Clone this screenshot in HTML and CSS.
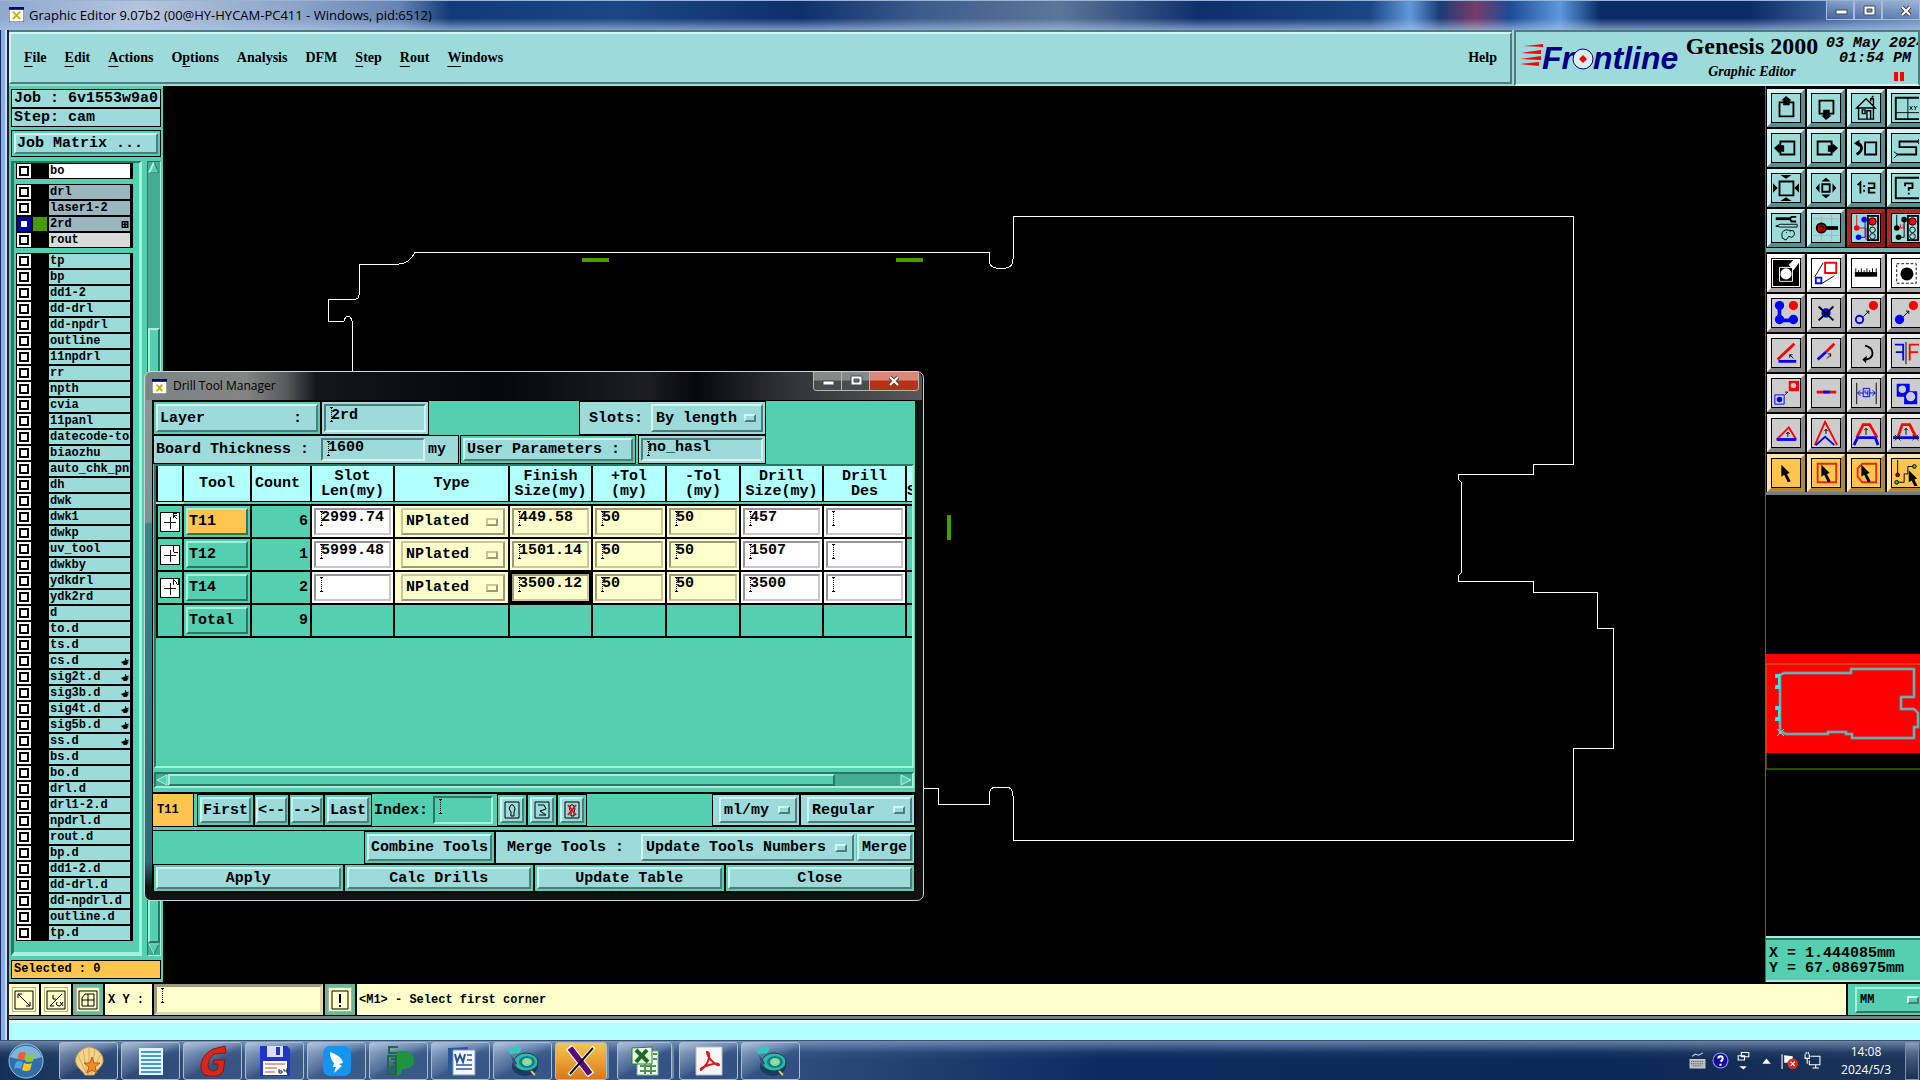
FILE: index.html
```html
<!DOCTYPE html>
<html lang="en">
<head>
<meta charset="utf-8">
<title>Graphic Editor 9.07b2</title>
<link rel="stylesheet" href="styles.css">
</head>
<body>
<header class="titlebar">
  <svg class="app-icon" viewBox="0 0 16 16"><rect width="16" height="16" fill="#fff" stroke="#333"/><rect width="16" height="3" fill="#000080"/><path d="M4 5l8 8M12 5l-8 8" stroke="#c8b400" stroke-width="2"/></svg>
  <span class="title-text">Graphic Editor 9.07b2 (00@HY-HYCAM-PC411 - Windows, pid:6512)</span>
  <div class="win-buttons">
    <button aria-label="Minimize"><svg viewBox="0 0 28 20"><rect x="9" y="9" width="11" height="4" fill="#fff" stroke="#445"/></svg></button>
    <button aria-label="Maximize"><svg viewBox="0 0 28 20"><path d="M9 5h11v9H9zM12 8v3h5V8z" fill="#fff" stroke="#445" fill-rule="evenodd"/></svg></button>
    <button class="wide" aria-label="Close"><svg viewBox="0 0 28 20"><path d="M5 6l8 8M13 6l-8 8" stroke="#445" stroke-width="4"/><path d="M5 6l8 8M13 6l-8 8" stroke="#fff" stroke-width="2"/></svg></button>
  </div>
</header>

<main class="app">
  <div class="top">
    <nav class="menubar">
      <button><u>F</u>ile</button><button><u>E</u>dit</button><button><u>A</u>ctions</button><button>O<u>p</u>tions</button><button>Analysis</button><button>DFM</button><button><u>S</u>tep</button><button><u>R</u>out</button><button><u>W</u>indows</button>
      <button class="help">Help</button>
    </nav>
    <div class="brand">
      <svg class="logo" viewBox="0 0 160 34" role="img" aria-label="Frontline">
        <g fill="#f00"><path d="M3 5L23 3v3zM1 12L21 9v4zM0 18l21-3v4zM0 23l19-2v4z"/></g>
        <text x="22" y="28">Fr</text><text x="73" y="28">ntline</text>
        <circle cx="63" cy="18" r="10" fill="#d8f0f4" stroke="#000080"/><path d="M63 14l4 4-4 4-4-4z" fill="#f00"/>
      </svg>
      <div class="product"><b>Genesis 2000</b><i>Graphic Editor</i></div>
      <div class="clock"><span>03 May 2024</span><span class="time">01:54 PM</span><svg viewBox="0 0 10 9"><path d="M0 0h4v9H0zM6 0h4v9H6z" fill="#f00"/></svg></div>
    </div>
  </div>

  <div class="workspace">
    <aside class="sidebar">
      <div class="info job">Job : 6v1553w9a0</div>
      <div class="info">Step: cam</div>
      <div class="matrix"><button class="raised">Job Matrix ...</button></div>
      <div class="layer-area">
        <div class="layers">
          <div class="group">
            <label class="layer white"><input type="checkbox"><i></i><span>bo</span></label>
          </div>
          <div class="group">
            <label class="layer grey"><input type="checkbox"><i></i><span>drl</span></label>
            <label class="layer grey"><input type="checkbox"><i></i><span>laser1-2</span></label>
            <label class="layer grey"><input type="checkbox" checked><i class="on"></i><span>2rd</span><svg viewBox="0 0 5 5"><path d="M0 0h5v5H0zM1 1v1h1V1zM3 1v1h1V1zM1 3v1h1V3zM3 3v1h1V3z" fill-rule="evenodd"/></svg></label>
            <label class="layer pale"><input type="checkbox"><i></i><span>rout</span></label>
          </div>
          <div class="group">
            <label class="layer"><input type="checkbox"><i></i><span>tp</span></label>
            <label class="layer"><input type="checkbox"><i></i><span>bp</span></label>
            <label class="layer"><input type="checkbox"><i></i><span>dd1-2</span></label>
            <label class="layer"><input type="checkbox"><i></i><span>dd-drl</span></label>
            <label class="layer"><input type="checkbox"><i></i><span>dd-npdrl</span></label>
            <label class="layer"><input type="checkbox"><i></i><span>outline</span></label>
            <label class="layer"><input type="checkbox"><i></i><span>11npdrl</span></label>
            <label class="layer"><input type="checkbox"><i></i><span>rr</span></label>
            <label class="layer"><input type="checkbox"><i></i><span>npth</span></label>
            <label class="layer"><input type="checkbox"><i></i><span>cvia</span></label>
            <label class="layer"><input type="checkbox"><i></i><span>11panl</span></label>
            <label class="layer"><input type="checkbox"><i></i><span>datecode-to</span></label>
            <label class="layer"><input type="checkbox"><i></i><span>biaozhu</span></label>
            <label class="layer"><input type="checkbox"><i></i><span>auto_chk_pnl</span></label>
            <label class="layer"><input type="checkbox"><i></i><span>dh</span></label>
            <label class="layer"><input type="checkbox"><i></i><span>dwk</span></label>
            <label class="layer"><input type="checkbox"><i></i><span>dwk1</span></label>
            <label class="layer"><input type="checkbox"><i></i><span>dwkp</span></label>
            <label class="layer"><input type="checkbox"><i></i><span>uv_tool</span></label>
            <label class="layer"><input type="checkbox"><i></i><span>dwkby</span></label>
            <label class="layer"><input type="checkbox"><i></i><span>ydkdrl</span></label>
            <label class="layer"><input type="checkbox"><i></i><span>ydk2rd</span></label>
            <label class="layer"><input type="checkbox"><i></i><span>d</span></label>
            <label class="layer"><input type="checkbox"><i></i><span>to.d</span></label>
            <label class="layer"><input type="checkbox"><i></i><span>ts.d</span></label>
            <label class="layer"><input type="checkbox"><i></i><span>cs.d</span><svg viewBox="0 0 8 8"><use href="#hand"/></svg></label>
            <label class="layer"><input type="checkbox"><i></i><span>sig2t.d</span><svg viewBox="0 0 8 8"><use href="#hand"/></svg></label>
            <label class="layer"><input type="checkbox"><i></i><span>sig3b.d</span><svg viewBox="0 0 8 8"><use href="#hand"/></svg></label>
            <label class="layer"><input type="checkbox"><i></i><span>sig4t.d</span><svg viewBox="0 0 8 8"><use href="#hand"/></svg></label>
            <label class="layer"><input type="checkbox"><i></i><span>sig5b.d</span><svg viewBox="0 0 8 8"><use href="#hand"/></svg></label>
            <label class="layer"><input type="checkbox"><i></i><span>ss.d</span><svg viewBox="0 0 8 8"><use href="#hand"/></svg></label>
            <label class="layer"><input type="checkbox"><i></i><span>bs.d</span></label>
            <label class="layer"><input type="checkbox"><i></i><span>bo.d</span></label>
            <label class="layer"><input type="checkbox"><i></i><span>drl.d</span></label>
            <label class="layer"><input type="checkbox"><i></i><span>drl1-2.d</span></label>
            <label class="layer"><input type="checkbox"><i></i><span>npdrl.d</span></label>
            <label class="layer"><input type="checkbox"><i></i><span>rout.d</span></label>
            <label class="layer"><input type="checkbox"><i></i><span>bp.d</span></label>
            <label class="layer"><input type="checkbox"><i></i><span>dd1-2.d</span></label>
            <label class="layer"><input type="checkbox"><i></i><span>dd-drl.d</span></label>
            <label class="layer"><input type="checkbox"><i></i><span>dd-npdrl.d</span></label>
            <label class="layer"><input type="checkbox"><i></i><span>outline.d</span></label>
            <label class="layer"><input type="checkbox"><i></i><span>tp.d</span></label>
          </div>
        </div>
        <div class="vscroll">
          <svg viewBox="0 0 12 12"><path d="M6 0L1 12h11z" fill="#54cfb0"/><path d="M6 0L1 11" stroke="#b4f2e0" stroke-width="2"/><path d="M6 0l5 11H1" fill="none" stroke="#2f7563" stroke-width="1"/></svg>
          <div class="vtrack"></div><div class="vthumb"></div>
          <svg viewBox="0 0 12 12"><path d="M1 1h10L6 11z" fill="#54cfb0" stroke="#2f7563"/><path d="M6 11L1 1h10" fill="none" stroke="#b4f2e0"/></svg>
        </div>
      </div>
      <div class="selected">Selected : 0</div>
    </aside>

    <section class="canvas">
      <svg viewBox="163 86 1602 897" preserveAspectRatio="xMinYMin slice" fill="none" stroke="#fff">
        <g shape-rendering="crispEdges">
        <path d="M352 379V321Q351 317 348 316Q345 317 344 321H328V299H356Q359 299 359 295V264H399Q410 263 415 252H989V259Q989 267 996 268H1006Q1013 267 1013 259V216H1573V464H1533V474H1458V479L1461 482V573L1458 576V581H1533V592H1597V628H1613V748H1573V840H1013V796Q1013 787 1006 787H996Q989 787 989 796V804H938V788H919"/>
        </g>
        <g stroke="#459b00" stroke-width="4"><path d="M582 260h27M896 260h27M949 515v25"/></g>
      </svg>
    </section>

    <aside class="tools">
      <div class="toolgrid">
        <button class="t" aria-label="Pan up"><svg viewBox="0 0 28 28"><path d="M7 8h15v15H7z" fill="none" stroke="#000" stroke-width="2"/><path d="M14 1l6 5h-2v5h-7V6H9z"/></svg></button>
        <button class="t" aria-label="Pan down"><svg viewBox="0 0 28 28"><path d="M7 6h15v14H7z" fill="none" stroke="#000" stroke-width="2"/><path d="M14 27l6-5h-2v-6h-7v6H9z"/></svg></button>
        <button class="t" aria-label="Home"><svg viewBox="0 0 28 28" fill="none" stroke="#000"><path d="M4 14L14 4l10 10zM6 14v12h16V14M10 16h3v4h-3zM15 26v-9h4v9M19 7V4h3v7M20 3l2-2" stroke-width="1.5"/></svg></button>
        <button class="t" aria-label="Zoom XY"><svg viewBox="0 0 28 28" fill="none" stroke="#000"><path d="M3 3h28v23H3z" stroke-width="2"/><path d="M16 3v23M3 19h26M18 12l3 4M21 12l-3 4M23 12l1 2 2-2M24 14v2"/></svg></button>
        <button class="t" aria-label="Pan left"><svg viewBox="0 0 28 28"><path d="M8 7h15v14H8z" fill="none" stroke="#000" stroke-width="2"/><path d="M1 14l6-5v2h5v7H7v2z"/></svg></button>
        <button class="t" aria-label="Pan right"><svg viewBox="0 0 28 28"><path d="M5 7h15v14H5z" fill="none" stroke="#000" stroke-width="2"/><path d="M27 14l-6-5v2h-5v7h5v2z"/></svg></button>
        <button class="t" aria-label="Previous view"><svg viewBox="0 0 28 28" fill="none" stroke="#000"><path d="M13 8h12v13H13z" stroke-width="2"/><path d="M4 9q4 0 5 4t-5 8" stroke-width="3"/><path d="M1 9l6-4v8z" fill="#000" stroke="none"/></svg></button>
        <button class="t" aria-label="Serpentine"><svg viewBox="0 0 28 28" fill="none" stroke="#000"><path d="M28 7H7v6h18v8H4" stroke-width="2"/><path d="M1 18l4 3-4 4M28 4l-2 3 2 3"/></svg></button>
        <button class="t" aria-label="Zoom out"><svg viewBox="0 0 28 28"><path d="M7 7h15v15H7z" fill="none" stroke="#000" stroke-width="2"/><path d="M8 0h12l-6 4zM8 28h12l-6-4zM0 9v10l5-5zM28 9v10l-5-5z"/></svg></button>
        <button class="t" aria-label="Zoom in"><svg viewBox="0 0 28 28"><path d="M10 10h8v8h-8z" fill="none" stroke="#000" stroke-width="2"/><path d="M14 3l5 4H9zM14 25l5-4H9zM3 14l4-5v10zM25 14l-4-5v10z"/></svg></button>
        <button class="t" aria-label="Zoom ratio"><svg viewBox="0 0 28 28" fill="none" stroke="#000" stroke-width="2"><path d="M5 11l3-3v12M12 11v2M12 16v2M16 9h7v5h-6v5h7"/></svg></button>
        <button class="t" aria-label="Query"><svg viewBox="0 0 28 28" fill="none" stroke="#000" stroke-width="2"><path d="M3 3h28v22H3zM13 12V9h8v5h-4v3M17 19v2"/></svg></button>
        <button class="t" aria-label="Settings"><svg viewBox="0 0 28 28" fill="none" stroke="#000"><path d="M3 4h15" stroke-width="3"/><path d="M25 2h-5l-2 2 2 3h5" stroke-width="2"/><path d="M3 12l5-2h18v3H8zM10 25q-2-8 4-9l8 1q3 5-2 7l-3-1-3 4zM14 19h1M18 18h1"/></svg></button>
        <button class="t" aria-label="Snap"><svg viewBox="0 0 28 28"><path d="M9 0v28M20 0v28M0 4h28M0 22h28" stroke="#c0a8a8"/><circle cx="9" cy="14" r="6"/><path d="M12 14h15" stroke="#000" stroke-width="4"/><path d="M6 11h6v6H6zM8 13h2v2H8z" fill="none" stroke="#f00"/></svg></button>
        <button class="t red" aria-label="Net check"><svg viewBox="0 0 28 28" fill="none"><path d="M4 0v14h10v13" stroke="#f00"/><path d="M13 2v22H6" stroke="#00f"/><g fill="#f00"><circle cx="4" cy="14" r="3"/></g><g fill="#00f"><circle cx="12" cy="5" r="3"/><circle cx="6" cy="24" r="3"/></g><path d="M16 1h11v26H16z" stroke="#000" stroke-width="2"/><circle cx="21" cy="7" r="4" fill="#f00" stroke="#000"/><circle cx="21" cy="16" r="3" stroke="#000"/><circle cx="21" cy="23" r="3" stroke="#000"/></svg></button>
        <button class="t red" aria-label="Net compare"><svg viewBox="0 0 28 28" fill="none"><path d="M4 0v14M12 4v20H6" stroke="#000"/><path d="M6 14h7M8 10v4M11 10v4" stroke="#f00"/><g fill="#000"><circle cx="4" cy="14" r="3"/><circle cx="12" cy="5" r="3"/><circle cx="6" cy="24" r="3"/></g><path d="M16 1h11v26H16z" stroke="#000" stroke-width="2"/><circle cx="21" cy="7" r="4" fill="#f00" stroke="#000"/><circle cx="21" cy="16" r="3" stroke="#000"/><circle cx="21" cy="23" r="3" stroke="#000"/></svg></button>
      </div>
      <div class="toolgrid second">
        <button class="t w" aria-label="Zoom to feature"><svg viewBox="0 0 28 28"><path d="M0 0h28v28H0z"/><path d="M17 5l5-5h6v3l-6 8z" fill="#fff"/><path d="M7 8h14v15H7z" fill="none" stroke="#fff"/><circle cx="14" cy="15" r="6" fill="#fff"/></svg></button>
        <button class="t w" aria-label="Copy shape"><svg viewBox="0 0 28 28" fill="none"><path d="M2 18L11 3M10 25l13-8" stroke="#000"/><path d="M13 3h12v11H13z" stroke="#f00" stroke-width="2"/><path d="M3 19h6v6H3z" stroke="#00f" stroke-width="2"/></svg></button>
        <button class="t w" aria-label="Measure"><svg viewBox="0 0 28 28"><path d="M2 13h24v5H2z"/><path d="M3 9v6M6 11v4M9 9v6M12 11v4M15 9v6M18 11v4M21 9v6M25 9v6" stroke="#000"/></svg></button>
        <button class="t w" aria-label="Select pad"><svg viewBox="0 0 28 28"><path d="M4 4h21v21H4z" fill="none" stroke="#000" stroke-dasharray="3 2"/><circle cx="15" cy="15" r="7"/></svg></button>

        <button class="t g" aria-label="Line points"><svg viewBox="0 0 28 28" fill="#00f"><path d="M7 6v16h15" fill="none" stroke="#00f" stroke-width="4"/><circle cx="7" cy="6" r="5"/><circle cx="7" cy="21" r="5"/><circle cx="22" cy="21" r="5"/><circle cx="22" cy="6" r="5" fill="#f00"/></svg></button>
        <button class="t g" aria-label="Delete"><svg viewBox="0 0 28 28"><circle cx="14" cy="14" r="5" fill="#00f"/><path d="M6 7l16 15M22 7L6 22" stroke="#000" stroke-width="2"/></svg></button>
        <button class="t g" aria-label="Move"><svg viewBox="0 0 28 28"><circle cx="22" cy="6" r="5" fill="#f00"/><circle cx="7" cy="21" r="4" fill="none" stroke="#00f" stroke-width="2"/><path d="M11 18l6-6M14 12h3v3" fill="none" stroke="#000"/></svg></button>
        <button class="t g" aria-label="Copy"><svg viewBox="0 0 28 28"><circle cx="22" cy="6" r="5" fill="#f00"/><circle cx="7" cy="21" r="5" fill="#00f"/><path d="M11 18l6-6M14 12h3v3" fill="none" stroke="#000"/></svg></button>

        <button class="t g" aria-label="Rotate line"><svg viewBox="0 0 28 28" fill="none"><path d="M5 21L23 4" stroke="#f00" stroke-width="3"/><path d="M6 23h19" stroke="#00f" stroke-width="3"/><path d="M22 20l-4-4M18 19v-3h3" stroke="#000"/></svg></button>
        <button class="t g" aria-label="Extend line"><svg viewBox="0 0 28 28" fill="none"><path d="M14 13L23 4" stroke="#f00" stroke-width="3"/><path d="M5 21l9-8" stroke="#00f" stroke-width="3"/><path d="M15 20l4-4M16 15h3v3" stroke="#000"/></svg></button>
        <button class="t g" aria-label="Rotate"><svg viewBox="0 0 28 28" fill="none" stroke="#000" stroke-width="2"><path d="M13 6q8 2 8 8t-7 7"/><path d="M15 17l-5 4 4 4z" fill="#000" stroke="none"/></svg></button>
        <button class="t g" aria-label="Mirror"><svg viewBox="0 0 28 28" fill="none" stroke-width="2"><path d="M2 5h9v17M3 13h8" stroke="#00f"/><path d="M14 2v24" stroke="#000" stroke-width="1"/><path d="M28 5H18v17M18 13h9" stroke="#f00"/></svg></button>

        <button class="t g" aria-label="Change symbol"><svg viewBox="0 0 28 28"><path d="M17 1h11v11H17z" fill="#f00"/><circle cx="22" cy="6" r="3" fill="#ccc"/><path d="M2 16h10v10H2z" fill="none" stroke="#00f"/><circle cx="7" cy="21" r="3" fill="#00f"/><path d="M13 16l3-3h-3" fill="none" stroke="#000"/></svg></button>
        <button class="t g" aria-label="Merge line"><svg viewBox="0 0 28 28"><path d="M4 13h21" stroke="#f00" stroke-width="3"/><path d="M11 13h7" stroke="#00f" stroke-width="3"/></svg></button>
        <button class="t g" aria-label="Spacing"><svg viewBox="0 0 28 28" fill="none" stroke="#00f"><path d="M4 3v23M25 3v23" stroke="#000"/><path d="M11 9h7v9h-7zM5 14h6M18 14h6M8 11l-3 3 3 3M21 11l3 3-3 3M13 11v3h3M16 11v6"/></svg></button>
        <button class="t g" aria-label="Step pattern"><svg viewBox="0 0 28 28"><path d="M4 4h14v8h8v14H12v-8H4z" fill="#00f"/><circle cx="10" cy="10" r="4" fill="#ccc"/><circle cx="19" cy="18" r="5" fill="#ccc"/></svg></button>

        <button class="t g" aria-label="Move triangle"><svg viewBox="0 0 28 28" fill="none"><path d="M4 21L17 8l8 13" stroke="#f00" stroke-width="2"/><path d="M4 21h21" stroke="#00f" stroke-width="3"/><path d="M16 18v-5M14 15l2-2 2 2" stroke="#000"/></svg></button>
        <button class="t g" aria-label="Stretch peak"><svg viewBox="0 0 28 28" fill="none"><path d="M2 27L13 2l13 25" stroke="#f00" stroke-width="2"/><path d="M3 27l10-9 10 9" stroke="#00f" stroke-width="2"/><path d="M14 15v-5M12 12l2-2 2 2" stroke="#000"/></svg></button>
        <button class="t g" aria-label="Stretch trapezoid"><svg viewBox="0 0 28 28" fill="none"><path d="M4 19L11 5h7l8 14" stroke="#f00" stroke-width="3"/><path d="M1 27l4-8h19l3 8" stroke="#00f" stroke-width="3"/><path d="M14 16V9M12 11l2-2 2 2" stroke="#000"/></svg></button>
        <button class="t g" aria-label="Trim trapezoid"><svg viewBox="0 0 28 28" fill="none"><path d="M5 19L10 5h8l7 14" stroke="#f00" stroke-width="3"/><path d="M0 19h28" stroke="#00f" stroke-width="3"/><path d="M14 16V9M12 11l2-2 2 2M2 16l6 6M8 16l-6 6M21 16l6 6M27 16l-6 6" stroke="#000"/></svg></button>

        <button class="t y" aria-label="Select"><svg viewBox="0 0 28 28"><use href="#arrow"/></svg></button>
        <button class="t y" aria-label="Select in frame"><svg viewBox="0 0 28 28"><path d="M5 4h20v20H5z" fill="none" stroke="#e22a10" stroke-width="2"/><use href="#arrow"/></svg></button>
        <button class="t y" aria-label="Select in polygon"><svg viewBox="0 0 28 28"><path d="M10 4h15v20H10l-5-6V9z" fill="none" stroke="#e22a10" stroke-width="2"/><use href="#arrow"/></svg></button>
        <button class="t y" aria-label="Select net"><svg viewBox="0 0 28 28"><path d="M5 0v15M5 24h7v-9h4V7h8" fill="none" stroke="#000"/><circle cx="5" cy="16" r="2" fill="#b01010" stroke="#000"/><circle cx="4" cy="24" r="2" fill="#2c2" stroke="#000"/><circle cx="23" cy="7" r="2" fill="#2c2" stroke="#000"/><use href="#arrow" x="8" y="6"/></svg></button>
      </div>
      <div class="overview">
        <svg viewBox="0 -2 154 440" preserveAspectRatio="xMinYMin slice" fill="none">
          <path d="M0 157h154v99H0z" fill="#f00"/>
          <path d="M0 272V167M0 167h154" stroke="#c87800"/><path d="M0 272h154" stroke="#459b00"/>
          <path d="M14 237V178l4-2h67v-4h63v28h-13v12h13l4 4v14h-4v11H86v-4h-6v-2H62v2H20l-6-3" stroke="#808080" stroke-width="3"/>
          <path d="M14 237V178l4-2h67v-4h63v28h-13v12h13l4 4v14h-4v11H86v-4h-6v-2H62v2H20l-6-3" stroke="#58d8dc"/>
          <path d="M9 179h5M9 190h5M9 211h5M9 222h5" stroke="#20f0f8" stroke-width="4"/>
          <path d="M13 178v12M13 211v12" stroke="#20f0f8" stroke-width="2"/>
          <path d="M11 232l7 7M18 232l-7 7" stroke="#9cc"/>
        </svg>
      </div>
      <div class="coords"><pre>X = 1.444085mm
Y = 67.086975mm</pre></div>
    </aside>
  </div>

  <div class="status">
    <button class="sbtn" aria-label="Diagonal"><svg viewBox="0 0 20 20" fill="none" stroke="#000"><path d="M1 1h18v18H1zM4 4l12 12M4 8V4h4M16 12v4h-4"/></svg></button>
    <button class="sbtn" aria-label="Angle"><svg viewBox="0 0 20 20" fill="none" stroke="#000"><path d="M1 1h18v18H1zM4 16L16 4M4 16h4M7 5v4h3M11 12q-2 4 3 4M14 12l3 4M17 12l-3 4"/></svg></button>
    <button class="sbtn framed" aria-label="Grid"><svg viewBox="0 0 20 20" fill="none" stroke="#000"><path d="M1 1h18v18H1zM7 4h9v12H4V8zM10 4v12M4 10h12"/></svg></button>
    <label class="xy" for="xy">X Y :</label>
    <input id="xy" class="xy-entry caret">
    <button class="sbtn framed" aria-label="Alert"><svg viewBox="0 0 20 20" fill="none" stroke="#000"><path d="M2 1h16v18H2z"/><path d="M10 4v9M10 15v2" stroke-width="2"/></svg></button>
    <output class="message">&lt;M1&gt; - Select first corner</output>
    <div class="unit"><span class="opt"><select aria-label="Units"><option>MM</option></select></span></div>
  </div>
  <div class="strip"></div>
</main>

<footer class="taskbar">
  <button class="start" aria-label="Start"><svg viewBox="0 0 38 38"><circle cx="19" cy="19" r="17" fill="#2f6ea8" stroke="#9cc4e4"/><path d="M3 15a17 17 0 0 1 32 0q-16 6-32 0z" fill="#7db4dc"/><path d="M12 11q4-2 7 0l-2 7q-4-2-7 0z" fill="#f0602a"/><path d="M20 12q4 2 8-1l-2 8q-4 2-8 0z" fill="#8ecb3c"/><path d="M9 20q4-2 7 0l-2 7q-4-2-7 0z" fill="#4da4e8"/><path d="M17 21q4 2 8 0l-2 7q-4 2-8 0z" fill="#fbc62c"/></svg></button>
  <button class="task" aria-label="Shell"><svg viewBox="0 0 32 32"><path d="M16 2C7 3 1 12 3 18c2 6 6 7 9 12h9c3-6 8-8 9-13C31 10 25 3 16 2z" fill="#f3d28b" stroke="#c99a4a"/><path d="M16 3v26M10 4l4 25M22 4l-4 25M5 10l8 18M27 10l-8 18" stroke="#d9ac5e" fill="none"/><path d="M19 12l2 6h6l-5 4 2 6-5-3-5 3 2-6-5-4h6z" fill="#f08a28" stroke="#c05a10"/></svg></button>
  <button class="task" aria-label="Notes"><svg viewBox="0 0 32 32"><path d="M4 3h24v27H4z" fill="#e8f4fb"/><path d="M6 7h20M6 11h20M6 15h20M6 19h20M6 23h20M6 27h20" stroke="#3f9cc8" stroke-width="2"/></svg></button>
  <button class="task" aria-label="G tool"><svg viewBox="0 0 32 32"><path d="M28 1L16 4Q5 10 4 20t8 11h9l5-4 2-12H17l-1 4h5l-1 6-3 1q-6 0-6-6t6-11l12-1z" fill="#d8281c" stroke="#8c1410"/></svg></button>
  <button class="task" aria-label="Save tool"><svg viewBox="0 0 32 32"><path d="M1 1h27l3 3v27H1z" fill="#1c36c8"/><path d="M8 1h16v11H8z" fill="#dde"/><path d="M17 2h4v8h-4z" fill="#1c36c8"/><path d="M4 16h24v14H4z" fill="#fff"/><path d="M6 19h20M6 23h12M6 27h10" stroke="#c44"/><path d="M20 24v4h3v-2h-3M25 24v2h3M28 23v5" stroke="#222" fill="none"/></svg></button>
  <button class="task" aria-label="Messenger"><svg viewBox="0 0 32 32"><rect x="2" y="1" width="28" height="30" rx="7" fill="#1296f0"/><path d="M9 7q12 4 13 11l-4 1 3 2-8 7 2-6h-3l1-4q-4-4-4-11z" fill="#fff"/></svg></button>
  <button class="task" aria-label="P tool"><svg viewBox="0 0 32 32"><path d="M14 6h8q9 1 9 9t-9 9h-3q0 6-5 7z" fill="#1d9440"/><path d="M15 2H6v6h8M5 11v18h8V11zM8 14h5M10 18h3M8 22h5M10 26h3" fill="none" stroke="#15703a" stroke-width="2"/></svg></button>
  <button class="task" aria-label="Word"><svg viewBox="0 0 32 32"><path d="M3 3l20-1v28L3 27z" fill="#2b579a"/><path d="M8 5h22v25H8z" fill="#f4f8ff" stroke="#7c98c8"/><path d="M11 20h16M11 24h16M22 10h5M22 15h5" stroke="#5b7fc0" stroke-width="2"/><path d="M10 9l2 8 3-7 3 7 2-8" fill="none" stroke="#2b579a" stroke-width="2"/></svg></button>
  <button class="task" aria-label="Genesis"><svg viewBox="0 0 32 32"><use href="#disc"/></svg></button>
  <button class="task active" aria-label="X server"><svg viewBox="0 0 32 32"><path d="M4 2l22 28" stroke="#fff" stroke-width="8"/><path d="M29 2L4 30" stroke="#fff" stroke-width="4"/><path d="M5 3l20 26" stroke="#5a0a78" stroke-width="6"/><path d="M28 3L5 29" stroke="#111" stroke-width="2"/></svg></button>
  <button class="task stack" aria-label="Excel"><svg viewBox="0 0 32 32"><path d="M8 6h21v24H8z" fill="#f4fff4" stroke="#7cae7c"/><path d="M3 3l20-1v17H3z" fill="#e8f8e0" stroke="#2f7d32"/><path d="M11 21h16M11 26h16M16 19v10M22 19v10M24 9h4M24 14h4" stroke="#4a9a4a" stroke-width="2"/><path d="M7 5l12 12M18 5L7 17" stroke="#1d6b25" stroke-width="4"/></svg></button>
  <button class="task" aria-label="PDF reader"><svg viewBox="0 0 32 32"><path d="M3 2h26v28H3z" fill="#f6f6f6" stroke="#bbb"/><path d="M14 7q3 0 2 6t-8 12q-2-2 8-5t10 0q-2 1-7-4t-5-9z" fill="none" stroke="#d02020" stroke-width="2"/></svg></button>
  <button class="task" aria-label="Genesis 2"><svg viewBox="0 0 32 32"><use href="#disc"/></svg></button>
  <div class="tray">
    <svg class="kbd" viewBox="0 0 16 16" fill="none" stroke="#ccc"><path d="M3 4l3-2 3 1 4-2"/><path d="M1 7h14v8H1z" fill="#bbb"/><path d="M2 9h12M2 11h12M4 13h8" stroke="#555" stroke-dasharray="1 1"/></svg>
    <svg viewBox="0 0 16 16"><circle cx="8" cy="8" r="7" fill="#1010a0" stroke="#99c"/><path d="M6 6q0-2 2-2t2 2-2 3M8 11v2" fill="none" stroke="#fff" stroke-width="2"/></svg>
    <svg class="restore" viewBox="0 0 16 20" fill="none" stroke="#fff"><path d="M6 2h7v4H6zM3 5h6v4H3z"/><path d="M4 15h7l-3 3z" fill="#fff" stroke="none"/></svg>
    <svg viewBox="0 0 16 16"><path d="M4 11h8L8 6z" fill="#fff"/></svg>
    <svg viewBox="0 0 16 16"><path d="M1 2v14" stroke="#fff"/><path d="M3 3l8 1v6H3z" fill="#fff"/><circle cx="11" cy="11" r="5" fill="#d03020"/><path d="M9 9l4 4M13 9l-4 4" stroke="#fff"/></svg>
    <svg viewBox="0 0 16 16" fill="none" stroke="#fff"><path d="M6 4h9v8H5V8M8 15h6M11 12v3M1 2v4h4V2M3 6v5M2 0v2M4 0v2"/></svg>
    <div class="tclock"><span>14:08</span><span>2024/5/3</span></div>
    <button class="desk" aria-label="Show desktop"></button>
  </div>
</footer>

<section class="dialog" aria-label="Drill Tool Manager">
  <header class="dtitle">
    <svg class="app-icon" viewBox="0 0 16 16"><rect width="16" height="16" fill="#fff" stroke="#333"/><rect width="16" height="3" fill="#000080"/><path d="M5 6l6 7M11 6l-6 7" stroke="#c8b400" stroke-width="2"/></svg>
    <span>Drill Tool Manager</span>
    <div class="dbuttons">
      <button aria-label="Minimize"><svg viewBox="0 0 28 18"><rect x="9" y="9" width="11" height="4" fill="#fff" stroke="#445"/></svg></button>
      <button aria-label="Maximize"><svg viewBox="0 0 28 18"><path d="M9 4h11v9H9zM12 7v3h5V7z" fill="#fff" stroke="#445" fill-rule="evenodd"/></svg></button>
      <button class="close" aria-label="Close"><svg viewBox="0 0 28 18"><path d="M10 5l8 8M18 5l-8 8" stroke="#544" stroke-width="4"/><path d="M10 5l8 8M18 5l-8 8" stroke="#fff" stroke-width="2"/></svg></button>
    </div>
  </header>
  <div class="dbody">
    <div class="row r1">
      <div class="box teal w-layer"><button class="raised spread"><span>Layer</span><span>:</span></button></div>
      <div class="box w-lfield"><input class="entry caret" aria-label="Layer" value="2rd"></div>
      <div class="box slots"><label for="slots">Slots:</label><span class="opt"><select id="slots"><option>By length</option></select></span></div>
    </div>
    <div class="row r2">
      <div class="box w-board"><label for="board">Board Thickness :</label><input id="board" class="entry caret" value="1600"><span>my</span></div>
      <div class="box teal w-user"><button class="raised left">User Parameters :</button></div>
      <div class="box w-hasl"><input class="entry caret" aria-label="User parameters" value="no_hasl"></div>
    </div>
    <div class="tablebox">
      <table>
        <colgroup><col class="c0"><col class="c1"><col class="c2"><col class="c3"><col class="c4"><col class="c3"><col class="c5"><col class="c5"><col class="c3"><col class="c3"><col class="c3"></colgroup>
        <thead><tr><th></th><th>Tool</th><th class="count">Count</th><th>Slot<br>Len(my)</th><th>Type</th><th>Finish<br>Size(my)</th><th>+Tol<br>(my)</th><th>-Tol<br>(my)</th><th>Drill<br>Size(my)</th><th>Drill<br>Des</th><th><br>Size(my)</th></tr></thead>
        <tbody>
          <tr>
            <td><button class="plus" aria-label="Expand"><svg viewBox="0 0 20 20" fill="none" stroke="#000"><path d="M3 11h14M10 4v14M14 0v6M18 1h-4M18 3h-4l4 4" shape-rendering="crispEdges"/></svg></button></td>
            <td><button class="tool picked">T11</button></td><td class="n">6</td>
            <td class="wh"><input class="entry caret" aria-label="Slot length" value="2999.74"></td>
            <td class="cr"><span class="opt"><select aria-label="Type"><option>NPlated</option></select></span></td>
            <td class="cr"><input class="entry caret" aria-label="Finish size" value="449.58"></td>
            <td class="cr"><input class="entry caret" aria-label="Plus tolerance" value="50"></td>
            <td class="cr"><input class="entry caret" aria-label="Minus tolerance" value="50"></td>
            <td class="wh"><input class="entry caret" aria-label="Drill size" value="457"></td>
            <td class="wh"><input class="entry caret" aria-label="Drill designator"></td><td></td>
          </tr>
          <tr>
            <td><button class="plus" aria-label="Expand"><svg viewBox="0 0 20 20" fill="none" stroke="#000"><path d="M3 11h14M10 4v14M14 0v7h5" shape-rendering="crispEdges"/></svg></button></td>
            <td><button class="tool">T12</button></td><td class="n">1</td>
            <td class="wh"><input class="entry caret" aria-label="Slot length" value="5999.48"></td>
            <td class="cr"><span class="opt"><select aria-label="Type"><option>NPlated</option></select></span></td>
            <td class="cr"><input class="entry caret" aria-label="Finish size" value="1501.14"></td>
            <td class="cr"><input class="entry caret" aria-label="Plus tolerance" value="50"></td>
            <td class="cr"><input class="entry caret" aria-label="Minus tolerance" value="50"></td>
            <td class="wh"><input class="entry caret" aria-label="Drill size" value="1507"></td>
            <td class="wh"><input class="entry caret" aria-label="Drill designator"></td><td></td>
          </tr>
          <tr>
            <td><button class="plus" aria-label="Expand"><svg viewBox="0 0 20 20" fill="none" stroke="#000"><path d="M3 11h14M10 4v14M14 7V0l5 7V0" shape-rendering="crispEdges"/></svg></button></td>
            <td><button class="tool">T14</button></td><td class="n">2</td>
            <td class="wh"><input class="entry caret" aria-label="Slot length"></td>
            <td class="cr"><span class="opt"><select aria-label="Type"><option>NPlated</option></select></span></td>
            <td class="cr current"><input class="entry caret" aria-label="Finish size" value="3500.12"></td>
            <td class="cr"><input class="entry caret" aria-label="Plus tolerance" value="50"></td>
            <td class="cr"><input class="entry caret" aria-label="Minus tolerance" value="50"></td>
            <td class="wh"><input class="entry caret" aria-label="Drill size" value="3500"></td>
            <td class="wh"><input class="entry caret" aria-label="Drill designator"></td><td></td>
          </tr>
          <tr><td></td><td><button class="tool">Total</button></td><td class="n">9</td><td></td><td></td><td></td><td></td><td></td><td></td><td></td><td></td></tr>
        </tbody>
      </table>
    </div>
    <div class="hscroll">
      <svg viewBox="0 0 12 12"><path d="M11 1v10L1 6z" fill="#54cfb0" stroke="#b4f2e0"/></svg>
      <div class="hthumb"></div><div class="htrack"></div>
      <svg viewBox="0 0 12 12"><path d="M1 1v10l10-5z" fill="#54cfb0" stroke="#b4f2e0"/></svg>
    </div>
    <div class="row r3">
      <div class="cur">T11</div>
      <div class="box teal"><button class="raised">First</button></div>
      <div class="box teal arrow"><button class="raised">&lt;--</button></div>
      <div class="box teal arrow"><button class="raised">--&gt;</button></div>
      <div class="box teal"><button class="raised">Last</button></div>
      <label class="index" for="index">Index:</label><input id="index" class="entry caret idx">
      <div class="box teal ic"><button class="raised" aria-label="Highlight on"><svg viewBox="0 0 16 18" fill="none" stroke="#000"><path d="M1 1h14v16H1zM7 11q-3-3-1-6t4 0 0 6v4H7z"/></svg></button></div>
      <div class="box teal ic"><button class="raised" aria-label="Route"><svg viewBox="0 0 16 18" fill="none" stroke="#000"><path d="M1 1h14v16H1zM4 4h6l2 4-6 2 6 4H5"/></svg></button></div>
      <div class="box teal ic"><button class="raised" aria-label="Highlight off"><svg viewBox="0 0 16 18" fill="none" stroke="#000"><path d="M1 1h14v16H1zM7 11q-3-3-1-6t4 0 0 6v4H7z"/><path d="M4 4l8 10M12 4L4 14" stroke="#e01010" stroke-width="2"/></svg></button></div>
      <div class="box push w-ml"><span class="opt"><select aria-label="Units"><option>ml/my</option></select></span></div>
      <div class="box w-reg"><span class="opt"><select aria-label="Mode"><option>Regular</option></select></span></div>
    </div>
    <div class="row r4">
      <div class="box teal push w-comb"><button class="raised">Combine Tools</button></div>
      <div class="box w-merge"><label for="merge">Merge Tools :</label><span class="opt"><select id="merge"><option>Update Tools Numbers</option></select></span><div class="mbtn"><button class="raised">Merge</button></div></div>
    </div>
    <div class="row r5">
      <div class="box teal"><button class="raised">Apply</button></div>
      <div class="box teal"><button class="raised">Calc Drills</button></div>
      <div class="box teal"><button class="raised">Update Table</button></div>
      <div class="box teal"><button class="raised">Close</button></div>
    </div>
  </div>
</section>

<svg class="defs" aria-hidden="true">
  <defs>
    <path id="hand" d="M0 4h2V3h2V0h1v2h3v2H7v1h1v1H7v1H6v1H2V6H0z"/>
    <path id="arrow" d="M9 5l9 9-3 1 4 8-3 1-4-8-3 2z"/>
    <g id="disc"><ellipse cx="18" cy="21" rx="13" ry="10" fill="#183c60"/><ellipse cx="19" cy="17" rx="12" ry="9" fill="#30b8a8" stroke="#0c4850"/><ellipse cx="20" cy="17" rx="8" ry="6" fill="#1a7c80"/><ellipse cx="20" cy="17" rx="5" ry="4" fill="#70e0c0"/><circle cx="20" cy="17" r="2" fill="#e0d040"/><path d="M1 5l9-4 5 2-3 5-9 1z" fill="#35c8c0"/><path d="M4 10l6 8-3 4z" fill="#404880"/><path d="M24 26l4 4" stroke="#e0c060" stroke-width="2"/></g>
  </defs>
</svg>
</body>
</html>
```
FILE: styles.css
```css
:root {
  --teal: #54cfb0;
  --teal-lt: #a8f0dc;
  --teal-dk: #2f7563;
  --panel: #9ddbdb;
  --panel-lt: #d0f6f4;
  --panel-dk: #4f7d7d;
  --cream: #ffffcc;
  --orange: #ffc54e;
  --mono: "Liberation Mono", "Courier New", monospace;
}
*, *::before, *::after { box-sizing: border-box; }
body {
  margin: 0;
  height: 100vh;
  display: flex;
  flex-direction: column;
  overflow: hidden;
  background: #000;
  font: bold 15px/15px var(--mono);
  color: #000;
}
button, input, select { font: inherit; color: inherit; border-radius: 0; margin: 0; }
button { padding: 0; border: 0; background: none; white-space: nowrap; }
svg { display: block; }
label, span { white-space: nowrap; }
.defs { position: absolute; width: 0; height: 0; }

/* main window title */
.titlebar {
  height: 30px;
  flex: none;
  display: flex;
  align-items: center;
  gap: 5px;
  padding: 0 0 2px 9px;
  border-top: 1px solid #9ab4d4;
  background: linear-gradient(to bottom, transparent 60%, rgba(170, 195, 230, .7)),
    linear-gradient(to right, #8fa9cf 0, #b4c4dc 140px, #8ba3c8 300px, #6583b4 400px, #123a78 450px, #1c4684 620px, #0d2f6c 800px, #3c5c8c 920px, #5c7698 1060px, #0d2f6c 1200px, #1c4684 1370px, #6098dc 1410px, #1a3c78 1440px, #783c68 1475px, #1c4c98 1510px, #5c98dc 1560px, #0a2c68 1600px, #0a2c68 1750px, #4a70a8 1850px, #7090bc);
}
.app-icon { width: 15px; height: 15px; flex: none; }
.title-text { font: 13px/20px "Open Sans", sans-serif; flex: 1; }
.win-buttons { display: flex; align-self: flex-start; }
.win-buttons button { width: 28px; height: 19px; border: 1px solid #a8bcd8; border-top: 0; background: linear-gradient(rgba(200, 215, 240, .5), rgba(80, 110, 160, .3)); overflow: hidden; }
.win-buttons button svg { width: 28px; height: 20px; }
.win-buttons .wide { width: 38px; }
.win-buttons .wide svg { margin-left: 14px; }

.app {
  flex: 1;
  min-height: 0;
  display: flex;
  flex-direction: column;
  border-left: 2px solid #223;
  margin-left: 7px;
  position: relative;
}
.app::before { content: ""; position: absolute; left: -9px; top: 0; bottom: 0; width: 7px; background: linear-gradient(to right, #1c2c50 1px, #88acec 1px 5px, #c8dcfc 5px); }

/* menu and brand */
.top { height: 56px; flex: none; display: flex; background: var(--panel); }
.menubar {
  flex: 1;
  display: flex;
  align-items: center;
  gap: 18px;
  padding: 0 13px 0 13px;
  border: 2px solid;
  border-color: var(--panel-lt) var(--panel-dk) var(--panel-dk) var(--panel-lt);
  box-shadow: 0 -2px #4f7d7d;
  margin: 2px 2px 2px 0;
}
.menubar button { font: bold 14px/20px "Liberation Serif", serif; }
.menubar u { text-underline-offset: 4px; }
.menubar .help { margin-left: auto; }
.brand { width: 406px; flex: none; display: flex; align-items: center; padding-left: 4px; overflow: hidden; border: 2px solid; border-color: var(--panel-dk) var(--panel-dk) var(--panel-lt) var(--panel-dk); }
.logo { width: 160px; height: 34px; flex: none; overflow: visible; }
.logo text { font: italic bold 32px "Liberation Sans", sans-serif; fill: #000080; }
.product { width: 144px; flex: none; display: flex; flex-direction: column; align-items: center; }
.product b { font: bold 24px/28px "Liberation Serif", serif; }
.product i { font: italic bold 14px/24px "Liberation Serif", serif; }
.clock { flex: none; width: 106px; display: flex; flex-direction: column; align-items: flex-start; font-style: italic; padding-left: 2px; }
.clock .time { padding-left: 13px; }
.clock svg { width: 10px; height: 9px; margin: 6px 0 0 68px; }

.workspace { flex: 1; min-height: 0; display: grid; grid-template-columns: 154px minmax(0, 1fr) 155px; }

/* left column */
.sidebar { background: var(--teal); padding: 3px 2px 2px; display: flex; flex-direction: column; min-height: 0; }
.info { background: var(--panel); border: 1px solid #000; height: 19px; line-height: 17px; padding-left: 2px; margin-bottom: -1px; overflow: hidden; flex: none; }
.job { margin-bottom: 0; }
.matrix { border: 1px solid #000; padding: 2px; height: 27px; margin: 4px 0 4px; flex: none; }
.matrix .raised { width: 100%; height: 21px; text-align: left; padding-left: 1px; }
.raised { background: var(--panel); border: 2px solid; border-color: var(--panel-lt) var(--panel-dk) var(--panel-dk) var(--panel-lt); display: block; }
.layer-area { flex: 1; min-height: 0; display: flex; gap: 5px; }
.layers {
  width: 133px;
  padding: 0 0 0 2px;
  border: solid;
  border-width: 2px 3px 4px 3px;
  border-color: var(--teal-dk) var(--teal-lt) var(--teal-lt) var(--teal-dk);
  display: flex;
  flex-direction: column;
  gap: 5px;
}
.group { width: 117px; background: #000; padding: 1px 0 1px 1px; flex: none; display: flex; flex-direction: column; gap: 2px; }
.layer { display: grid; grid-template-columns: 14px 14px 82px; gap: 2px; height: 14px; font-size: 12px; line-height: 14px; position: relative; }
.layer span { background: var(--panel); padding-left: 1px; overflow: hidden; height: 14px; width: 81px; }
.layer.white span { background: #fff; }
.layer.grey span { background: #9cb6c0; }
.layer.pale span { background: #dadada; }
.layer input { appearance: none; width: 14px; height: 14px; background: #fff; box-shadow: inset 0 0 0 2px #fff, inset 0 0 0 4px #000; }
.layer input:checked { box-shadow: inset 0 0 0 4px #0000a0; }
.layer .on { background: #459b00; }
.layer svg { position: absolute; right: 4px; top: 4px; width: 8px; height: 7px; }
.vscroll { width: 14px; background: #44ac92; border: 1px solid; border-color: var(--teal-dk) var(--teal-lt) var(--teal-lt) var(--teal-dk); display: flex; flex-direction: column; }
.vscroll svg { height: 12px; }
.vtrack { flex: 154; }
.vthumb { flex: 612; background: var(--teal); border: 2px solid; border-color: var(--teal-lt) var(--teal-dk) var(--teal-dk) var(--teal-lt); }
.selected { flex: none; margin-top: 4px; height: 19px; border: 1px solid #000; background: var(--orange); font-size: 12px; line-height: 17px; padding-left: 2px; margin-bottom: 1px; }

.canvas { background: #000; overflow: hidden; }
.canvas svg { width: 100%; height: 100%; }

/* tool palette */
.tools { display: flex; flex-direction: column; overflow: hidden; border-left: 1px solid var(--teal-dk); min-height: 0; }
.toolgrid { display: grid; grid-template-columns: repeat(4, 38px); gap: 2px; padding: 3px 0 1px 1px; flex: none; background: #000; border-bottom: 4px solid #79b5b5; }
.toolgrid.second { padding: 2px 0 0 1px; border-bottom: 3px solid #6f7f7f; }
.t { --c: #9ddbdb; --l: #d0f6f4; --d: #5c8c8c; width: 38px; height: 38px; background: var(--c); border: 4px solid; border-color: var(--l) var(--d) var(--d) var(--l); }
.t svg { width: 30px; height: 30px; padding: 1px; border: 1px solid #000; background: var(--c); }
.t.red { --l: #b02828; --d: #901818; }
.t.red svg { background: #9ddbdb; }
.t.w { --c: #fff; --l: #fff; --d: #aaa; }
.t.g { --c: #ccc; --l: #eee; --d: #888; }
.t.y { --c: #ffc54e; --l: #ffe6a8; --d: #b08838; }
.overview { flex: 1; min-height: 0; background: #000; overflow: hidden; }
.overview svg { width: 154px; height: 440px; }
.coords { flex: none; height: 46px; background: var(--teal); border-top: 2px solid var(--teal-lt); border-bottom: 2px solid var(--teal-lt); box-shadow: inset 0 2px var(--teal-dk); padding: 8px 0 0 3px; }
.coords pre { margin: 0; font: bold 15px/15px var(--mono); }

/* bottom rows */
.status { flex: none; height: 34px; border-top: 2px solid #000; border-bottom: 1px solid #000; background: #000; display: flex; gap: 2px; font-size: 12px; }
.sbtn { width: 30px; flex: none; background: var(--cream); border: 3px solid var(--cream); padding: 2px; box-shadow: inset 0 0 0 1px #b4b48c; }
.sbtn svg { width: 20px; height: 20px; }
.sbtn.framed { border-color: #66b8a0; }
.xy { width: 47px; flex: none; background: var(--cream); padding: 9px 0 0 3px; }
.xy-entry { width: 169px; border: 3px solid; border-color: #9a9a7c #d8d8ac #d8d8ac #9a9a7c; background-color: var(--cream); }
.message { flex: 1; background: var(--cream); padding: 9px 0 0 2px; }
.unit { width: 72px; flex: none; background: var(--teal); padding: 3px 0 2px 7px; overflow: hidden; }
.unit .opt { width: 80px; height: 26px; background: var(--teal); border-color: var(--teal-lt) var(--teal-dk) var(--teal-dk) var(--teal-lt); --mark: 14px; }
.strip { flex: none; height: 24px; border-top: 3px solid #6e8484; background: #b2ffff; box-shadow: inset 0 1px #000, inset 0 4px #d8ffff; }

/* option menus */
.opt { position: relative; display: block; border: 2px solid; border-color: var(--panel-lt) var(--panel-dk) var(--panel-dk) var(--panel-lt); background: var(--panel); --mark: 5px; }
.opt select { appearance: none; border: 0; background: none; width: 100%; height: 100%; padding: 0 0 0 3px; display: block; }
.opt::after { content: ""; position: absolute; right: var(--mark); top: 50%; margin-top: -4px; width: 12px; height: 8px; border: 2px solid; border-color: var(--panel-lt) var(--panel-dk) var(--panel-dk) var(--panel-lt); }

/* text entries, with the dotted insertion cursor */
.entry { border: 2px solid; border-color: var(--panel-dk) var(--panel-lt) var(--panel-lt) var(--panel-dk); background-color: var(--panel); padding: 0 0 6px 5px; min-width: 0; width: 100%; display: block; }
.caret {
  background-image: linear-gradient(#000, #000), linear-gradient(#000, #000), repeating-linear-gradient(#000 0 1px, transparent 1px 2px);
  background-size: 3px 1px, 3px 1px, 1px 14px;
  background-position: 4px 1px, 4px 15px, 5px 2px;
  background-repeat: no-repeat;
}

/* drill tool manager */
.dialog {
  position: absolute;
  left: 144px;
  top: 371px;
  width: 780px;
  padding: 0 7px 7px;
  border-radius: 7px;
  border: 1px solid #c8d4d4;
  background: linear-gradient(to right, transparent 50%, #111 50%), linear-gradient(#8c9898 0, #7c9494 150px, #3c848c 152px, #2c6c74 490px, #101414 515px);
}
.dtitle { height: 28px; margin: 0 -6px; padding: 0 3px 0 6px; display: flex; align-items: center; gap: 6px; font: 12px/20px "Open Sans", sans-serif; background: linear-gradient(to right, #7c8484 0, #848484 100px, #585a5c 140px, #14161c 170px, #05070c 350px, #1c1e22 500px, #07080c 550px, #303236 640px, #585858); border-radius: 6px 6px 0 0; }
.dtitle span { flex: 1; }
.dbuttons { display: flex; align-self: flex-start; border: 1px solid #b4b4b4; border-top: 0; border-radius: 0 0 4px 4px; overflow: hidden; }
.dbuttons button { width: 28px; height: 18px; border-right: 1px solid #b4b4b4; background: linear-gradient(#888 45%, #4c4c4c 50%); overflow: hidden; }
.dbuttons svg { width: 28px; height: 18px; margin: auto; }
.dbuttons .close { width: 48px; border: 0; background: linear-gradient(#d88878 45%, #b83018 50%); }
.dbody { background: var(--teal); border: 1px solid #000; height: 493px; display: flex; flex-direction: column; }
.row { display: flex; flex: none; }
.box { border: 1px solid #000; background: var(--panel); padding: 2px; display: flex; align-items: center; }
.box.teal { background: var(--teal); }
.box .raised, .box .opt { height: 100%; flex: 1; }
.r1 { height: 34px; }
.w-layer { width: 168px; }
.spread { display: flex; justify-content: space-between; align-items: center; padding: 0 14px 0 2px; }
.w-lfield { width: 108px; }
.w-lfield .entry, .w-hasl .entry { height: 100%; }
.slots { margin-left: 150px; width: 187px; padding-left: 9px; }
.slots .opt { margin-left: 8px; }
.r2 { height: 29px; gap: 1px; }
.w-board { width: 306px; }
.w-board .entry { width: 104px; height: 100%; margin: 0 3px 0 12px; flex: none; padding-bottom: 4px; }
.w-user { width: 176px; }
.w-user .raised { text-align: left; padding-left: 2px; }
.w-hasl { width: 128px; margin-left: 1px; }
.w-hasl .entry { padding-bottom: 4px; }

.tablebox { flex: 1; min-height: 0; overflow: hidden; margin: 0 1px; border: 2px solid; border-color: var(--teal-dk) var(--teal-lt) var(--teal-lt) var(--teal-dk); }
table { table-layout: fixed; width: 834px; border-collapse: separate; border-spacing: 0; }
.c0 { width: 28px; } .c1 { width: 68px; } .c2 { width: 60px; } .c3 { width: 83px; } .c4 { width: 115px; } .c5 { width: 74px; }
th { height: 36px; padding: 0; background: #b2ffff; border-right: 2px solid #000; border-bottom: 1px solid #000; font: inherit; }
th:first-child, td:first-child { border-left: 2px solid #000; }
th:last-child, th.count { text-align: left; }
th.count { padding-left: 3px; }
tbody::before { content: ""; display: block; height: 2px; background: var(--teal-lt); }
td { height: 33px; padding: 2px; border-right: 2px solid #000; border-bottom: 2px solid #000; }
tbody tr:first-child td { border-top: 2px solid #000; height: 35px; }
td .entry { height: 27px; padding-bottom: 8px; }
td .opt { height: 27px; margin: 0 1px 0 4px; }
.wh { background: #fff; }
.wh .entry { background-color: #fff; border-color: #98939a #c8c8c8 #c8c8c8 #98939a; }
.cr { background: var(--cream); }
.cr .entry, .cr .opt { background-color: var(--cream); border-color: #9a9a7c #c8c8a0 #c8c8a0 #9a9a7c; }
.cr .opt { border-color: #c8c8a0 #9a9a7c #9a9a7c #c8c8a0; }
.cr .opt::after { border-color: #c8c8a0 #9a9a7c #9a9a7c #c8c8a0; }
.cr.current { background: #000; }
.n { text-align: right; }
.plus { width: 20px; height: 20px; background: #fff; border: 1px solid #000; display: block; }
.plus svg { width: 18px; height: 18px; }
.tool { width: 100%; height: 27px; background: var(--teal); border: 2px solid; border-color: var(--teal-lt) var(--teal-dk) var(--teal-dk) var(--teal-lt); text-align: left; padding-left: 1px; display: block; }
.tool.picked { background: var(--orange); }

.hscroll { flex: none; height: 16px; margin: 4px 1px; display: flex; background: #44ac92; border: 2px solid; border-color: var(--teal-dk) var(--teal-lt) var(--teal-lt) var(--teal-dk); }
.hscroll svg { width: 12px; height: 12px; }
.hthumb { flex: 668; background: var(--teal); border: 2px solid; border-color: var(--teal-lt) var(--teal-dk) var(--teal-dk) var(--teal-lt); }
.htrack { flex: 65; }
.r3 { height: 35px; border-top: 2px solid #000; border-bottom: 1px solid #000; }
.cur { width: 41px; background: var(--orange); font-size: 12px; padding: 9px 0 0 4px; border-right: 1px solid #000; margin-right: 3px; }
.r3 .raised { padding: 0 1px; text-align: center; }
.r3 .arrow { padding: 2px 1px; }
.r3 .arrow .raised { padding: 0; }
.index { padding: 9px 2px 0; }
.idx { width: 60px; margin: 2px 4px 2px 3px; background-color: var(--teal); border-color: var(--teal-dk) var(--teal-lt) var(--teal-lt) var(--teal-dk); }
.ic { width: 30px; }
.r3 .ic .raised { padding: 0 2px; }
.ic svg { width: 16px; height: 18px; }
.push { margin-left: auto; }
.w-ml { width: 88px; padding-left: 6px; }
.w-reg { width: 115px; padding-left: 6px; }
.r4 { height: 34px; margin-top: 3px; border-top: 1px solid #000; }
.w-comb { width: 131px; }
.w-merge { width: 420px; padding: 2px 1px 2px 11px; }
.w-merge label { flex: 1; }
.w-merge .opt { flex: none; width: 213px; margin-right: 2px; }
.w-merge .mbtn { background: var(--teal); width: 57px; height: 100%; padding: 0 1px; }
.mbtn .raised { width: 100%; }
.r5 { height: 28px; }
.r5 .box { flex: 1; }

/* taskbar */
.taskbar { flex: none; height: 40px; display: flex; gap: 3px; padding: 1px 0 1px 7px; border-top: 1px solid #3c5070; background: linear-gradient(rgba(190, 210, 240, .5), rgba(120, 150, 190, .1) 30%, rgba(0, 0, 0, 0) 50%), linear-gradient(to right, #143058 0, #3c5c88 300px, #2c4c7c 800px, #0c2c60 1100px, #0a2856 1600px, #1c3458); }
.start { width: 38px; height: 38px; margin-right: 11px; }
.task { width: 59px; height: 38px; border: 1px solid #a8bcd4; border-radius: 3px; background: linear-gradient(150deg, rgba(220, 232, 250, .6), rgba(140, 165, 205, .3) 45%, rgba(60, 90, 140, .3) 55%); }
.task svg { width: 32px; height: 32px; margin: 0 auto; }
.task.active { background: linear-gradient(#f0c850, #e89830 60%, #d87818); width: 52px; margin-right: 7px; box-shadow: 3px 0 0 -1px #7088ac; }
.task.stack { width: 55px; margin-right: 4px; box-shadow: 3px 0 0 -1px #7088ac; }
.tray { margin-left: auto; display: flex; align-items: center; gap: 6px; padding-right: 1px; }
.tray svg { width: 17px; height: 17px; }
.tray .restore { height: 22px; }
.tclock { display: flex; flex-direction: column; align-items: center; color: #fff; font: 12px/18px "Open Sans", sans-serif; padding: 0 8px 0 14px; }
.desk { width: 14px; height: 38px; border: 1px solid #7c90ac; background: linear-gradient(rgba(200, 215, 240, .4), rgba(20, 40, 80, .3)); }
```
